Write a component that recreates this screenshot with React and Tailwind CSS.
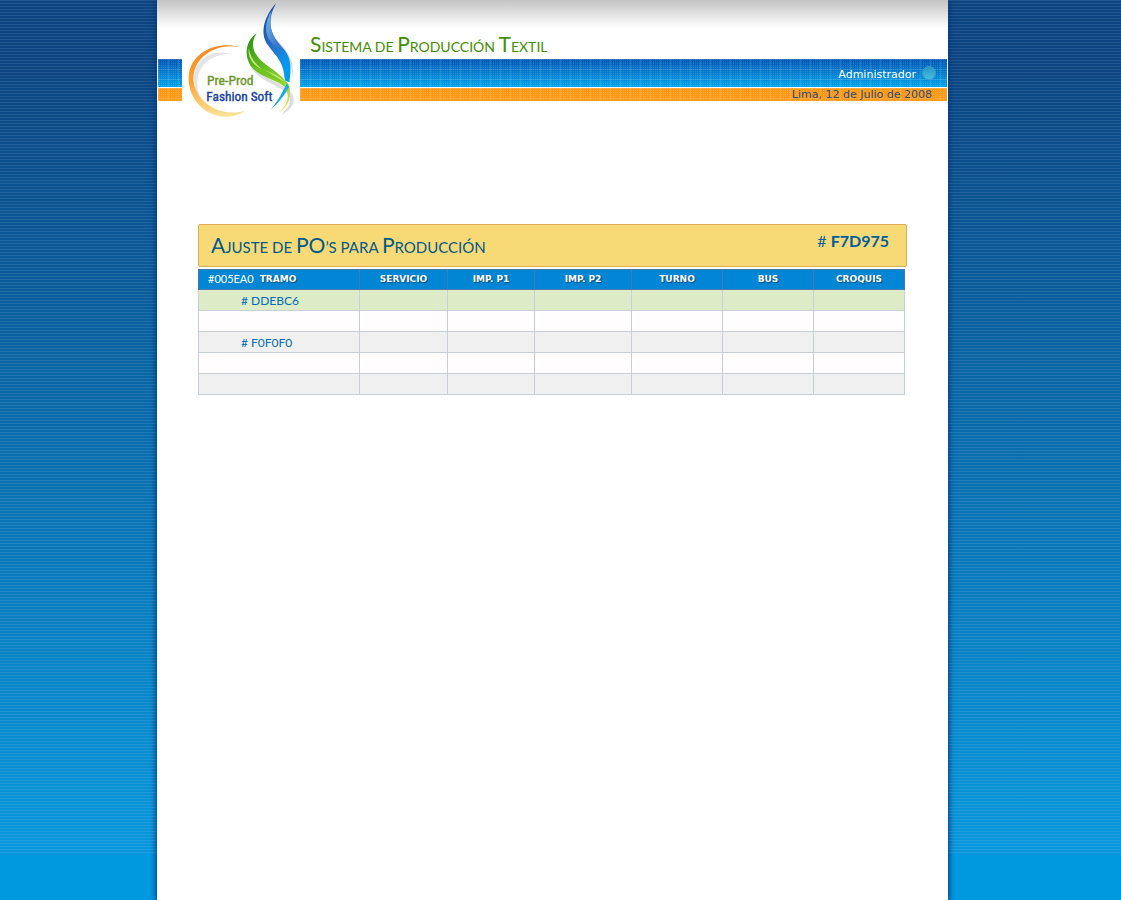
import React from "react";

const columns = [
  { label: "TRAMO", width: "w-[161px]" },
  { label: "SERVICIO", width: "w-[88px]" },
  { label: "IMP. P1", width: "w-[87px]" },
  { label: "IMP. P2", width: "w-[97px]" },
  { label: "TURNO", width: "w-[91px]" },
  { label: "BUS", width: "w-[91px]" },
  { label: "CROQUIS", width: "w-[91px]" },
];

const rows = [
  { name: "# DDEBC6", color: "bg-[#ddebc6]" },
  { name: "", color: "bg-[#fffdfe]" },
  { name: "# F0F0F0", color: "bg-[#f0f0f0]" },
  { name: "", color: "bg-[#fffdfe]" },
  { name: "", color: "bg-[#f0f0f0]" },
];

const mesh =
  "bg-[linear-gradient(to_right,rgba(255,255,255,0.12)_1px,transparent_1px),linear-gradient(to_bottom,rgba(255,255,255,0.12)_1px,transparent_1px),conic-gradient(rgba(255,255,255,0.13)_25%,transparent_25%)] bg-[size:10px_10px,10px_10px,2px_2px]";

function SmallCaps({ text, small }) {
  return text.split(/([A-ZÁÉÍÓÚ]+)/).map((part, i) =>
    i % 2 ? (
      <span key={i}>{part}</span>
    ) : (
      <span key={i} className={`uppercase ${small}`}>
        {part}
      </span>
    )
  );
}

function Bars({ user, date }) {
  return (
    <div>
      <div className="h-7 bg-linear-to-b from-[#0056b4] to-[#00a4ea]">
        <div className={`flex h-full items-center justify-end gap-1.5 pr-[11px] ${mesh}`}>
          {user && (
            <>
              <span className="pt-1 text-[11px] leading-4 text-white">{user}</span>
              <span className="size-3.5 rounded-full border border-[#3b9bcb] bg-linear-to-b from-[#2a97c6] to-[#45bfdc]" />
            </>
          )}
        </div>
      </div>
      <div className="mt-px h-[13px] bg-[#ff9814]">
        <div className={`flex h-full items-center justify-end pr-[15px] ${mesh}`}>
          {date && <span className="text-[11px] leading-3 text-[#27507c]">{date}</span>}
        </div>
      </div>
    </div>
  );
}

function Logo() {
  return (
    <svg viewBox="96 0 354 360" className="h-[120px] w-[118px] shrink-0" role="img" aria-label="Pre-Prod Fashion Soft">
      <defs>
        <linearGradient id="ring" x1="0" y1="0" x2="0" y2="1">
          <stop offset="0" stopColor="#f58a20" />
          <stop offset="0.5" stopColor="#ffa030" />
          <stop offset="1" stopColor="#fbe39a" />
        </linearGradient>
        <linearGradient id="blue" x1="0" y1="0" x2="0.4" y2="1">
          <stop offset="0" stopColor="#143f9b" />
          <stop offset="0.6" stopColor="#2872cc" />
          <stop offset="1" stopColor="#009cf2" />
        </linearGradient>
        <linearGradient id="shine" x1="0" y1="0" x2="1" y2="1">
          <stop offset="0" stopColor="#74b5eb" />
          <stop offset="1" stopColor="#2560b9" />
        </linearGradient>
        <linearGradient id="green" x1="0" y1="0" x2="0.8" y2="1">
          <stop offset="0" stopColor="#268f12" />
          <stop offset="0.55" stopColor="#6dbf25" />
          <stop offset="1" stopColor="#a4dc35" />
        </linearGradient>
        <linearGradient id="tail" x1="0" y1="0" x2="0" y2="1">
          <stop offset="0" stopColor="#9bd530" />
          <stop offset="1" stopColor="#fff16a" />
        </linearGradient>
      </defs>
      <path d="M249 164C180 140 128 184 132 246C136 292 160 316 184 328C151 302 136 270 144 231C154 183 200 157 249 164Z" fill="#e4e4e6" />
      <path d="M270 141C205 123 130 152 117 218C108 287 157 348 226 350C249 350 267 345 283 333C215 352 145 312 132 252C119 182 188 126 270 141Z" fill="url(#ring)" />
      <path d="M383 14C345 73 348 105 382 141C421 173 431 207 425 244C439 195 418 157 384 123C353 92 360 55 383 14Z" fill="#dcdce0" />
      <path d="M378 9C335 60 332 106 354 136C373 164 393 178 400 211C403 223 402 233 406 242L418 247C424 208 425 176 402 148C375 117 351 87 365 41C368 29 374 20 378 9Z" fill="url(#blue)" />
      <path d="M365 31C344 66 341 104 364 127C378 143 394 143 404 158C378 124 351 91 365 31Z" fill="url(#shine)" />
      <path d="M304 135C290 166 299 195 323 216C358 242 402 250 427 282C440 307 421 333 394 344C417 321 431 299 410 279C381 253 319 241 298 193C287 164 296 146 304 135Z" fill="#dedee1" />
      <path d="M320 100C286 122 282 168 302 197C325 229 368 236 398 256C410 264 415 274 416 286C423 267 420 254 405 241C373 205 335 193 316 160C304 136 309 116 320 100Z" fill="url(#green)" />
      <path d="M296 145C293 181 314 200 346 211C368 220 389 229 405 246C374 225 309 211 296 145Z" fill="#bce66f" />
      <path d="M302 194C325 222 375 226 408 258C401 250 360 214 335 207C320 203 309 200 302 194Z" fill="#73c620" />
      <path d="M411 250C394 284 379 309 363 328C388 308 406 281 417 262Z" fill="#18a9ea" />
      <path d="M406 265C421 286 412 314 386 339C411 324 422 299 418 277Z" fill="url(#tail)" />
      <text x="171" y="255" fill="#6d972b" stroke="#6d972b" strokeWidth="1.2" fontSize="41" fontFamily="'Roboto Condensed','DejaVu Sans Condensed',sans-serif">Pre-Prod</text>
      <text x="169" y="303" fill="#17439d" stroke="#17439d" strokeWidth="1.2" fontSize="40" fontFamily="'Roboto Condensed','DejaVu Sans Condensed',sans-serif">Fashion Soft</text>
    </svg>
  );
}

export default function App() {
  return (
    <div className="min-h-screen bg-[repeating-linear-gradient(to_bottom,rgba(255,255,255,0.13)_0px,rgba(255,255,255,0.13)_1px,rgba(255,255,255,0.03)_1px,rgba(255,255,255,0.03)_3px),linear-gradient(to_bottom,#033f7d_0px,#033f7d_60px,#0094dc_855px)] bg-[size:100%_855px] bg-no-repeat bg-[#0099e0] pr-4 font-['DejaVu_Sans',sans-serif]">
      <div className="mx-auto min-h-screen w-full max-w-[791px] bg-white shadow-[0_0_6px_1px_#003781]">
        <header className="flex bg-linear-to-b from-[#c4c4c4] to-white to-[28px] px-px">
          <div className="w-6 pt-[59px]">
            <Bars />
          </div>
          <Logo />
          <div className="flex-1">
            <h1 className="h-[59px] pt-8 pl-2.5 font-['Lato',sans-serif] text-[21px] leading-6 text-[#429000]">
              <SmallCaps text="Sistema de Producción Textil" small="text-[14px]" />
            </h1>
            <Bars user="Administrador" date="Lima, 12 de Julio de 2008" />
          </div>
        </header>

        <main className="px-[41px] pt-[104px]">
          <div className="flex h-[43px] justify-between rounded-xs border border-[#e3ad58] bg-[#f7d975] pr-[17px] pl-3 font-['Lato',sans-serif] text-[#005a8c]">
            <h2 className="pt-2 text-[21px] leading-6">
              <SmallCaps text="Ajuste de PO’s para Producción" small="text-[15px]" />
            </h2>
            <p className="pt-1.5 text-base leading-5 text-[#005ea0]">
              # <span className="font-bold">F7D975</span>
            </p>
          </div>

          <table className="mt-0.5 w-full max-w-[707px] table-fixed border-collapse">
            <thead>
              <tr className="h-5 bg-[#0086d4]">
                {columns.map((c, i) => (
                  <th
                    key={c.label}
                    className={`border border-[#4a78ae] p-0 pb-0.5 text-center align-middle text-[9px] leading-3 text-white [text-shadow:1px_1px_1px_#004a85] ${c.width}`}
                  >
                    {i === 0 ? (
                      <div className="flex items-center gap-1.5 pl-[9px]">
                        <span className="font-['Lato',sans-serif] text-[11px] font-normal text-shadow-none">#005EA0</span>
                        <span>{c.label}</span>
                      </div>
                    ) : (
                      c.label
                    )}
                  </th>
                ))}
              </tr>
            </thead>
            <tbody>
              {rows.map((r, i) => (
                <tr key={i} className={`h-[21px] ${r.color}`}>
                  {columns.map((c, j) => (
                    <td
                      key={c.label}
                      className="border border-[#c6ced6] p-0 pt-0.5 pl-[42px] font-['Lato',sans-serif] text-[12px] leading-4 text-[#006cba]"
                    >
                      {j === 0 ? r.name : null}
                    </td>
                  ))}
                </tr>
              ))}
            </tbody>
          </table>
        </main>
      </div>
    </div>
  );
}
